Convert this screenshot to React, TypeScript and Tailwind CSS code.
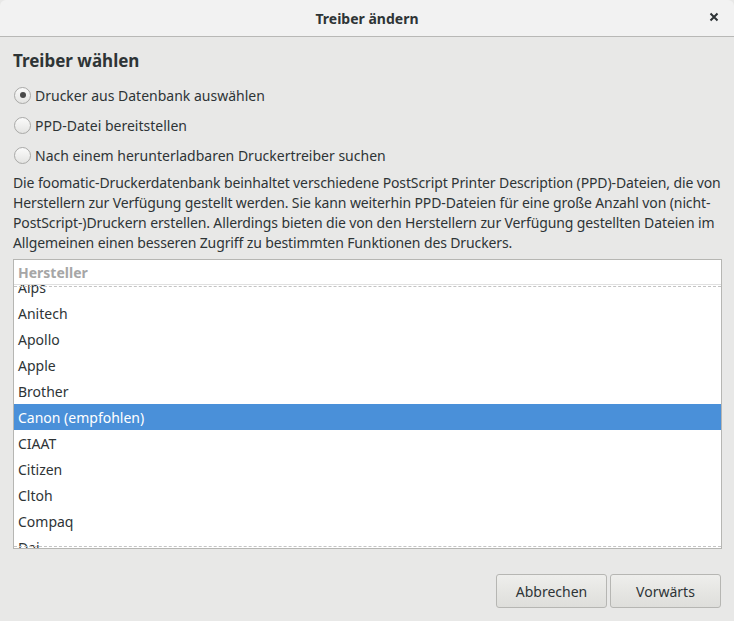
import React from "react";

const font = { fontFamily: '"Noto Sans", "Liberation Sans", sans-serif' };

function Radio({ checked, label }: { checked?: boolean; label: string }) {
  return (
    <div className="flex items-center h-[30px]">
      <div className="ml-[14px] w-[17px] h-[17px] rounded-full border border-[#a9a9a7] bg-gradient-to-b from-[#fafafa] to-[#e4e4e2] flex items-center justify-center">
        {checked && <div className="w-[6px] h-[6px] rounded-full bg-[#4a4a4a]" />}
      </div>
      <span className="ml-[4px] text-[14px] text-[#2e3436]">{label}</span>
    </div>
  );
}

const items = [
  "Alps",
  "Anitech",
  "Apollo",
  "Apple",
  "Brother",
  "Canon (empfohlen)",
  "CIAAT",
  "Citizen",
  "Cltoh",
  "Compaq",
  "Dai",
];

export default function App() {
  return (
    <div className="w-[734px] h-[621px] bg-[#e8e8e7] flex flex-col overflow-hidden" style={font}>
      <div className="h-[37px] bg-[#f2f2f2] border-b border-[#b8b8b6] rounded-t-[6px] flex items-center relative shrink-0">
        <div className="flex-1 text-center text-[14px] font-bold text-[#2e3436]">Treiber ändern</div>
        <div className="absolute right-[12px] top-[9px] w-[16px] h-[16px] flex items-center justify-center">
          <svg width="10" height="10" viewBox="0 0 10 10">
            <path d="M1.5 1.5 L8.5 8.5 M8.5 1.5 L1.5 8.5" stroke="#2e3436" strokeWidth="2" />
          </svg>
        </div>
      </div>
      <div className="px-[13px] flex flex-col">
        <div className="mt-[12px] h-[24px] text-[17px] font-bold text-[#2e3436] leading-[24px]">Treiber wählen</div>
        <div className="mt-[7px] -ml-[13px] flex flex-col">
          <Radio checked label="Drucker aus Datenbank auswählen" />
          <Radio label="PPD-Datei bereitstellen" />
          <Radio label="Nach einem herunterladbaren Druckertreiber suchen" />
        </div>
        <div className="mt-[3px] text-[14px] leading-[20px] text-[#2e3436] whitespace-nowrap tracking-[-0.12px]">
          <div>Die foomatic-Druckerdatenbank beinhaltet verschiedene PostScript Printer Description (PPD)-Dateien, die von</div>
          <div>Herstellern zur Verfügung gestellt werden. Sie kann weiterhin PPD-Dateien für eine große Anzahl von (nicht-</div>
          <div>PostScript-)Druckern erstellen. Allerdings bieten die von den Herstellern zur Verfügung gestellten Dateien im</div>
          <div>Allgemeinen einen besseren Zugriff zu bestimmten Funktionen des Druckers.</div>
        </div>
        <div className="mt-[6px] w-[709px] h-[290px] bg-white border border-[#b6b6b3] flex flex-col relative">
          <div className="h-[25px] shrink-0 border-b border-[#e0e0e0] flex items-center px-[4px] text-[14px] font-bold text-[#a6a6a6]">
            Hersteller
          </div>
          <div className="flex-1 overflow-hidden relative">
            <div className="-mt-[11px] flex flex-col">
              {items.map((it) => (
                <div
                  key={it}
                  className={
                    "h-[26px] shrink-0 flex items-center px-[4px] text-[14px] " +
                    (it.startsWith("Canon") ? "bg-[#4a90d9] text-white" : "text-[#2e3436]")
                  }
                >
                  {it}
                </div>
              ))}
            </div>
            <div className="absolute left-0 right-0 top-[1px] border-t border-dashed border-[#c4c4c4]" />
            <div className="absolute left-0 right-0 bottom-[1px] border-t border-dashed border-[#c4c4c4]" />
          </div>
        </div>
        <div className="mt-[25px] flex justify-end gap-[3px]">
          <button className="w-[111px] h-[34px] rounded-[3px] border border-[#b6b6b3] bg-gradient-to-b from-[#eeeeec] to-[#dededb] text-[14px] text-[#2e3436]">
            Abbrechen
          </button>
          <button className="w-[111px] h-[34px] rounded-[3px] border border-[#b6b6b3] bg-gradient-to-b from-[#eeeeec] to-[#dededb] text-[14px] text-[#2e3436]">
            Vorwärts
          </button>
        </div>
      </div>
    </div>
  );
}
